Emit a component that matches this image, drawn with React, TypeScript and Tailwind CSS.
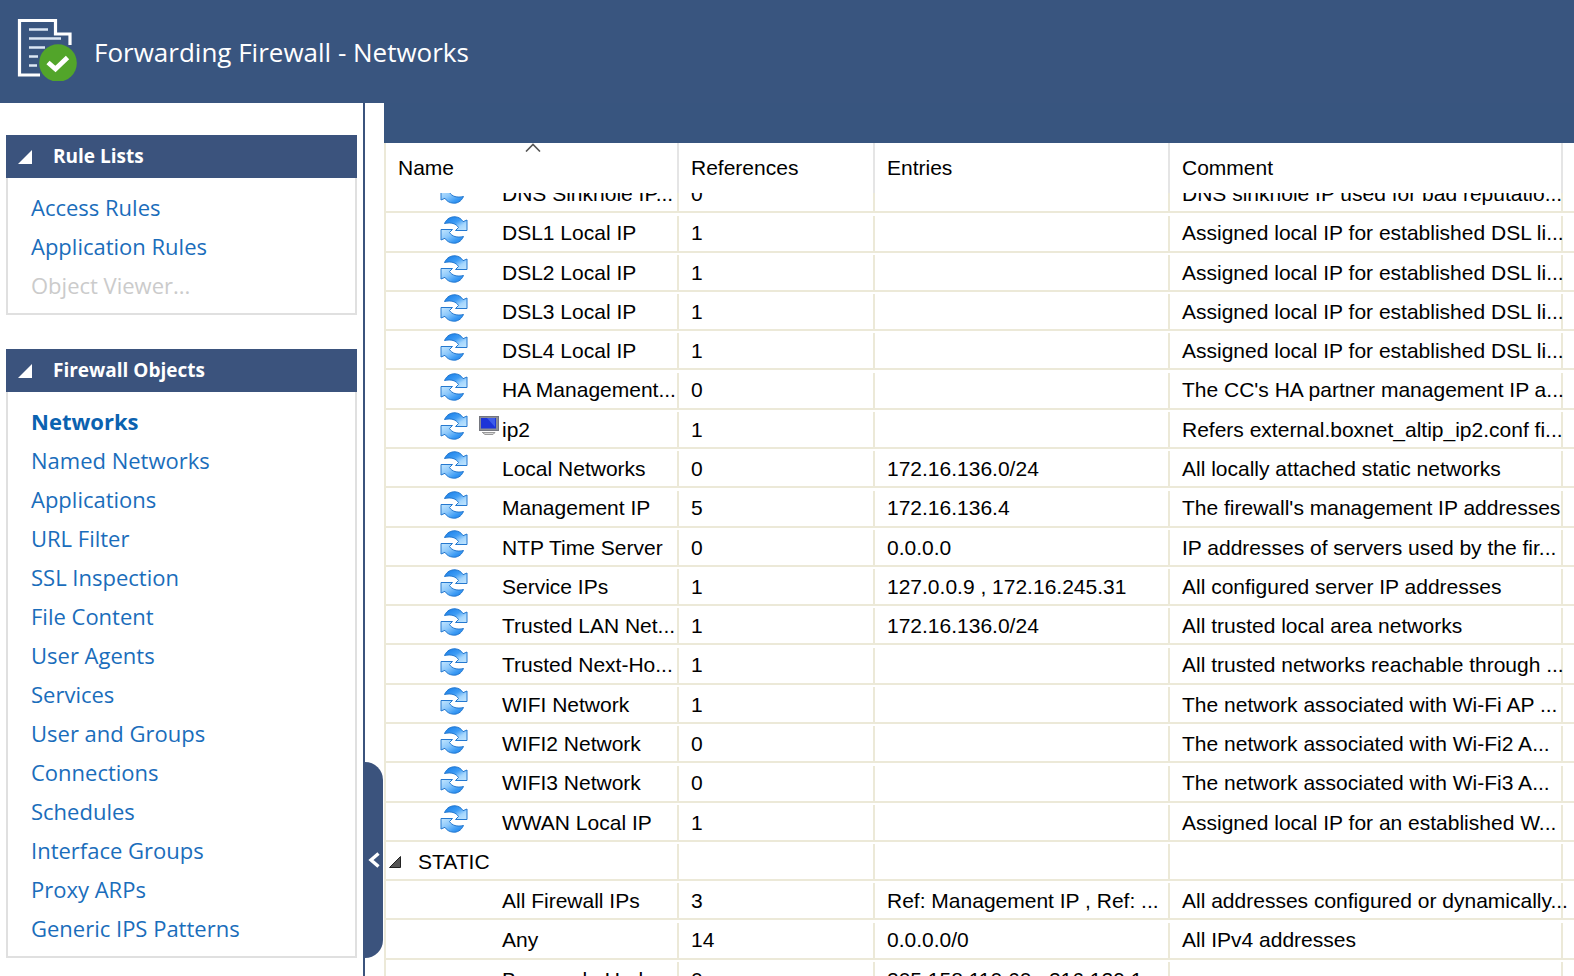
import React, { useId } from "react";

const ruleLists = [
  { label: "Access Rules" },
  { label: "Application Rules" },
  { label: "Object Viewer...", disabled: true },
];

const firewallObjects = [
  { label: "Networks", active: true },
  { label: "Named Networks" },
  { label: "Applications" },
  { label: "URL Filter" },
  { label: "SSL Inspection" },
  { label: "File Content" },
  { label: "User Agents" },
  { label: "Services" },
  { label: "User and Groups" },
  { label: "Connections" },
  { label: "Schedules" },
  { label: "Interface Groups" },
  { label: "Proxy ARPs" },
  { label: "Generic IPS Patterns" },
];

type Row = {
  name: string;
  refs?: string;
  entries?: string;
  comment?: string;
  kind: "dynamic" | "host" | "group" | "static";
};

const rows: Row[] = [
  { kind: "dynamic", name: "DNS Sinkhole IP...", refs: "0", comment: "DNS sinkhole IP used for bad reputatio..." },
  { kind: "dynamic", name: "DSL1 Local IP", refs: "1", comment: "Assigned local IP for established DSL li..." },
  { kind: "dynamic", name: "DSL2 Local IP", refs: "1", comment: "Assigned local IP for established DSL li..." },
  { kind: "dynamic", name: "DSL3 Local IP", refs: "1", comment: "Assigned local IP for established DSL li..." },
  { kind: "dynamic", name: "DSL4 Local IP", refs: "1", comment: "Assigned local IP for established DSL li..." },
  { kind: "dynamic", name: "HA Management...", refs: "0", comment: "The CC's HA partner management IP a..." },
  { kind: "host", name: "ip2", refs: "1", comment: "Refers external.boxnet_altip_ip2.conf fi..." },
  { kind: "dynamic", name: "Local Networks", refs: "0", entries: "172.16.136.0/24", comment: "All locally attached static networks" },
  { kind: "dynamic", name: "Management IP", refs: "5", entries: "172.16.136.4", comment: "The firewall's management IP addresses" },
  { kind: "dynamic", name: "NTP Time Server", refs: "0", entries: "0.0.0.0", comment: "IP addresses of servers used by the fir..." },
  { kind: "dynamic", name: "Service IPs", refs: "1", entries: "127.0.0.9 , 172.16.245.31", comment: "All configured server IP addresses" },
  { kind: "dynamic", name: "Trusted LAN Net...", refs: "1", entries: "172.16.136.0/24", comment: "All trusted local area networks" },
  { kind: "dynamic", name: "Trusted Next-Ho...", refs: "1", comment: "All trusted networks reachable through ..." },
  { kind: "dynamic", name: "WIFI Network", refs: "1", comment: "The network associated with Wi-Fi AP ..." },
  { kind: "dynamic", name: "WIFI2 Network", refs: "0", comment: "The network associated with Wi-Fi2 A..." },
  { kind: "dynamic", name: "WIFI3 Network", refs: "0", comment: "The network associated with Wi-Fi3 A..." },
  { kind: "dynamic", name: "WWAN Local IP", refs: "1", comment: "Assigned local IP for an established W..." },
  { kind: "group", name: "STATIC" },
  { kind: "static", name: "All Firewall IPs", refs: "3", entries: "Ref: Management IP , Ref: ...", comment: "All addresses configured or dynamically..." },
  { kind: "static", name: "Any", refs: "14", entries: "0.0.0.0/0", comment: "All IPv4 addresses" },
  { kind: "static", name: "Barracuda Upda...", refs: "0", entries: "205.158.110.60 , 216.129.1..." },
];

function RulesetIcon() {
  return (
    <svg viewBox="0 0 60 64" className="mt-[17px] h-16 w-[60px] self-start" aria-hidden="true">
      <path d="M23 58H2.500V3.500H38.500V17H53V28" fill="none" stroke="#fff" strokeWidth="3.200" />
      <path d="M12 12.500H31M12 21.500H44M12 30.500H28M12 39.500H21M12 48.500H20" stroke="#dbe6f4" strokeWidth="2.600" />
      <circle cx="41" cy="46" r="18.800" fill="#52a52a" />
      <path d="M31 45.500L38.500 52L50.500 40.500" fill="none" stroke="#fff" strokeWidth="4.800" />
    </svg>
  );
}

function RefreshIcon() {
  const fill = useId();
  return (
    <svg viewBox="0 0 28 28" className="h-7 w-7 shrink-0" aria-hidden="true">
      <defs>
        <linearGradient id={fill} x1="0" y1="0" x2="1" y2="1">
          <stop offset="0" stopColor="#1279e6" />
          <stop offset="0.450" stopColor="#3f9df5" />
          <stop offset="0.700" stopColor="#a5d6fd" />
          <stop offset="1" stopColor="#c4e7ff" />
        </linearGradient>
        <linearGradient id={fill + "b"} x1="0" y1="0" x2="1" y2="1">
          <stop offset="0" stopColor="#c4e7ff" />
          <stop offset="0.400" stopColor="#8cc8fb" />
          <stop offset="0.700" stopColor="#3f9df5" />
          <stop offset="1" stopColor="#1279e6" />
        </linearGradient>
      </defs>
      <path
        d="M4.500 7.500C7 2 11.500 0.700 15 0.800C19 1 21.500 3 23 5.700L27 4V14.500H15.500L18.500 11.500C16 7.500 11 6 4.500 7.500Z"
        fill={`url(#${fill})`}
        stroke="#2478cf"
        strokeWidth="1"
        strokeLinejoin="round"
      />
      <path
        d="M23.500 20.500C21 26 17 27.300 13.500 27.200C9.500 27 6.500 25 5 22.300L1 24V13.500H12.500L9.500 16.500C12 20.500 17 22 23.500 20.500Z"
        fill={`url(#${fill}b)`}
        stroke="#2478cf"
        strokeWidth="1"
        strokeLinejoin="round"
      />
    </svg>
  );
}

function MonitorIcon() {
  return (
    <svg viewBox="0 0 20 20" className="h-5 w-5 shrink-0" aria-hidden="true">
      <rect x="0.500" y="0.500" width="19" height="14" fill="#8b8d95" stroke="#74767f" />
      <rect x="2" y="2" width="15" height="10.500" fill="#1c34d8" />
      <path d="M8 2L16 11V2Z" fill="#3d5cea" />
      <path d="M3 16.500H16L14 18.500H6L4 17" fill="#d8d8d8" stroke="#9a9a9a" />
    </svg>
  );
}

type Item = { label: string; active?: boolean; disabled?: boolean };

function NavPanel({ title, items }: { title: string; items: Item[] }) {
  return (
    <section>
      <h2>
        <button
          type="button"
          className="flex h-[43px] w-full items-center gap-[21px] bg-[#3b537d] pl-3 text-left text-[19px] font-bold text-white"
        >
          <svg viewBox="0 0 14 14" className="h-[14px] w-[14px]" aria-hidden="true">
            <path d="M14 0V14H0Z" fill="#fff" />
          </svg>
          {title}
        </button>
      </h2>
      <ul className="border-2 border-t-0 border-[#e0e0e0] pt-[10px] pb-2">
        {items.map((item) => (
          <li key={item.label} className="flex h-[39px] items-center pl-[23px]">
            {item.disabled ? (
              <span className="text-[#cbcbcb]">{item.label}</span>
            ) : (
              <a href="#" className={item.active ? "font-bold text-[#0b62b0]" : "text-[#1a6dbb]"}>
                {item.label}
              </a>
            )}
          </li>
        ))}
      </ul>
    </section>
  );
}

function NameCell({ row }: { row: Row }) {
  if (row.kind === "group") {
    return (
      <div className="flex h-[35px] items-center gap-[17px] border-r-2 border-[#ece9d8] pl-[3px]">
        <svg viewBox="0 0 12 12" className="h-3 w-3" aria-hidden="true">
          <path d="M11.500 0.500V11.500H0.500Z" fill="#555" stroke="#222" />
        </svg>
        {row.name}
      </div>
    );
  }
  return (
    <div className="flex h-[35px] items-center border-r-2 border-[#ece9d8] pl-[54px]">
      <span className="flex h-full w-7 shrink-0 items-start">{row.kind !== "static" && <RefreshIcon />}</span>
      <span className="flex h-full w-[34px] shrink-0 items-start justify-end pt-1 pr-[3px]">
        {row.kind === "host" && <MonitorIcon />}
      </span>
      {row.name}
    </div>
  );
}

function TextCell({ text }: { text?: string }) {
  return (
    <td className="border-b-2 border-[#ece9d8] p-0 align-bottom">
      <div className="flex h-[35px] items-center border-r-2 border-[#ece9d8] pl-3">{text}</div>
    </td>
  );
}

const headCell = "sticky top-0 z-10 h-[50px] border-r-2 border-[#e5e5e5] bg-white p-0 pl-3 text-left font-normal";

export default function App() {
  return (
    <div className="flex h-screen flex-col overflow-hidden bg-white font-['Open_Sans','Noto_Sans',sans-serif] text-[22px] whitespace-nowrap">
      <header className="flex h-[103px] shrink-0 items-center gap-[17px] bg-[#39557f] pl-[17px] text-white">
        <RulesetIcon />
        <h1 className="pt-[2px] text-[26px]">Forwarding Firewall - Networks</h1>
      </header>
      <div className="flex min-h-0 flex-1">
        <nav className="flex w-[363px] shrink-0 flex-col gap-[34px] pt-8 pr-[6px] pl-[6px]">
          <NavPanel title="Rule Lists" items={ruleLists} />
          <NavPanel title="Firewall Objects" items={firewallObjects} />
        </nav>
        <div className="flex w-[21px] shrink-0 flex-col justify-end border-l-2 border-[#3b537d] pb-[18px]">
          <button
            type="button"
            aria-label="Collapse sidebar"
            className="flex h-[196px] w-[18px] items-center justify-center rounded-r-[18px] bg-[#3b537d]"
          >
            <svg viewBox="0 0 12 16" className="h-4 w-3" aria-hidden="true">
              <path d="M10.500 1.500L3 8L10.500 14.500" fill="none" stroke="#fff" strokeWidth="3.400" />
            </svg>
          </button>
        </div>
        <main className="flex min-w-0 flex-1 flex-col font-['Liberation_Sans',Arial,sans-serif]">
          <div className="h-10 shrink-0 bg-[#38557f]" />
          <div className="min-h-0 flex-1 overflow-hidden border-l-2 border-[#ece9d8] text-[21px] text-black">
            <table className="-mt-[19px] h-[875px] w-full table-fixed border-separate border-spacing-0">
              <thead>
                <tr>
                  <th className={"w-[293px] " + headCell}>
                    Name
                    <svg viewBox="0 0 16 9" className="absolute top-0 left-[139px] h-[9px] w-4" aria-hidden="true">
                      <path d="M1 8.500L8 1.500L15 8.500" fill="none" stroke="#555" strokeWidth="1.600" />
                    </svg>
                  </th>
                  <th className={"w-[196px] " + headCell}>References</th>
                  <th className={"w-[295px] " + headCell}>Entries</th>
                  <th className={headCell}>Comment</th>
                  <th className="sticky top-0 w-[11px] bg-white p-0" />
                </tr>
              </thead>
              <tbody>
                {rows.map((row) => (
                  <tr key={row.name}>
                    <td className="border-b-2 border-[#ece9d8] p-0 align-bottom">
                      <NameCell row={row} />
                    </td>
                    <TextCell text={row.refs} />
                    <TextCell text={row.entries} />
                    <TextCell text={row.comment} />
                    <td className="border-b-2 border-[#ece9d8] p-0" />
                  </tr>
                ))}
              </tbody>
            </table>
          </div>
        </main>
      </div>
    </div>
  );
}
